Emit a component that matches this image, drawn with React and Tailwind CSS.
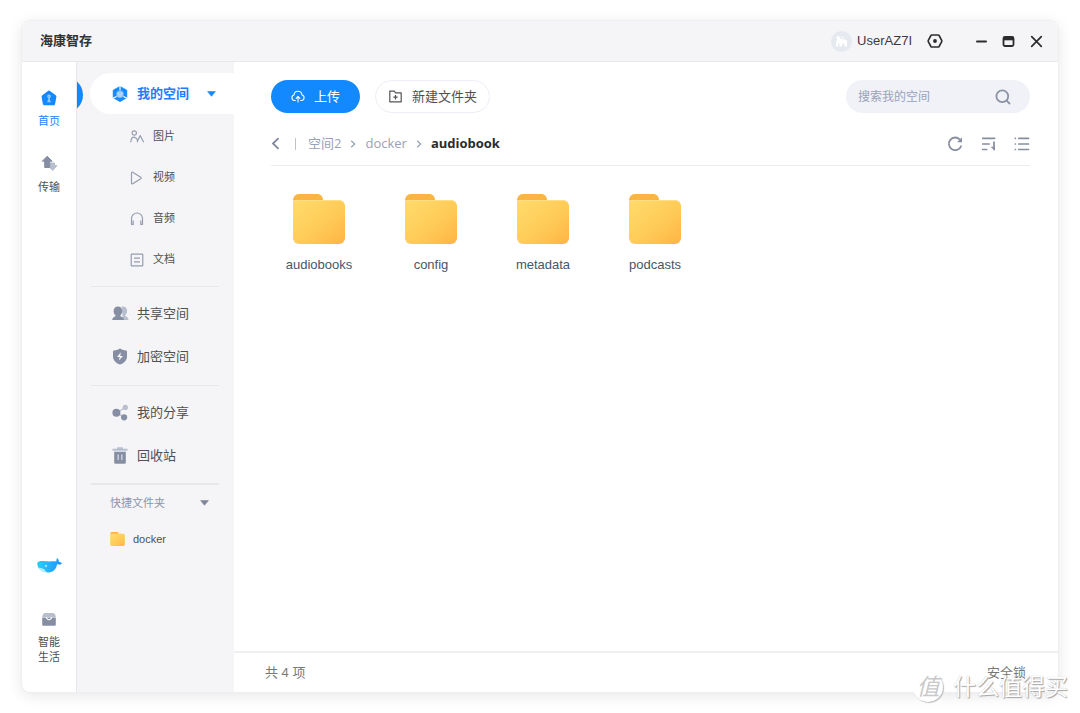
import React from "react";

const SLATE = "#868ea3";
const SLATE_LIGHT = "#b7bece";
const BLUE = "#1389ff";

function FolderIcon({ id, className }) {
  return (
    <svg viewBox="0 0 52 50" className={className} aria-hidden="true">
      <defs>
        <linearGradient id={id} x1="0" y1="0" x2="1" y2="1">
          <stop offset="0" stopColor="#ffdc6c" />
          <stop offset="0.55" stopColor="#ffcb58" />
          <stop offset="1" stopColor="#ffb443" />
        </linearGradient>
      </defs>
      <path d="M0 12V6a6 6 0 0 1 6-6h18c3.500 0 6 2.500 6 6v6z" fill="#ffb347" />
      <path d="M0 6h46a6 6 0 0 1 6 6v32a6 6 0 0 1-6 6H6a6 6 0 0 1-6-6z" fill={`url(#${id})`} />
      <path d="M0 6.500h46.500" stroke="#ffdf85" strokeWidth="1" />
    </svg>
  );
}

function HomeIcon() {
  return (
    <svg width="16" height="16" viewBox="0 0 16 16" aria-hidden="true">
      <path d="M7 .9a1.700 1.700 0 0 1 2 0l5.700 4.400c.6.500.8 1 .7 1.700l-1.300 7c-.2.900-.7 1.300-1.500 1.300H3.400c-.8 0-1.300-.4-1.500-1.300L.6 7c-.1-.7.100-1.200.7-1.700z" fill={BLUE} />
      <g fill="none" stroke="#b9dcff" strokeWidth="1.100">
        <circle cx="8" cy="6.200" r="1.200" />
        <path d="M8 7.400v3M6.300 11.800h3.400M6.800 10.300h2.400" />
      </g>
    </svg>
  );
}

function TransferIcon() {
  return (
    <svg width="17" height="17" viewBox="0 0 17 17" aria-hidden="true">
      <path d="M9 8h4.500v2.500H16l-4.300 5L8 11.500z" fill={SLATE_LIGHT} stroke={SLATE_LIGHT} strokeLinejoin="round" />
      <path d="M6.200 1.200l4.900 5H8.700v6.300h-5V6.200H1.300z" fill={SLATE} stroke={SLATE} strokeLinejoin="round" />
    </svg>
  );
}

function WhaleIcon() {
  return (
    <svg width="25" height="15" viewBox="0 0 25 15" aria-hidden="true">
      <defs>
        <linearGradient id="whale" x1="0" y1="0" x2="1" y2="0">
          <stop offset="0" stopColor="#2ccdf8" />
          <stop offset="1" stopColor="#1b95ff" />
        </linearGradient>
      </defs>
      <path d="M.3 4.700C1.200 3 4 2.700 9 3.300c4 .4 7.500-.3 10.200.3.300-1.200.2-2.400.9-3.600 1.300.9 1.900 2.300 1.800 4 1.200 0 2.300.4 3.100 1.400-1.300 1.400-3.200 1.300-5 .9-.6 4.500-3.500 8.200-8.500 8.200C5 14.500-.2 10.500.3 4.700z" fill="url(#whale)" />
      <path d="M1.500 9.500c2 .8 6 .5 8 4.800C6 14 3 12.500 1.500 9.500z" fill="#b4f1fc" />
      <circle cx="9" cy="8" r="0.900" fill="#d8f7ff" />
    </svg>
  );
}

function BoxIcon() {
  return (
    <svg width="14" height="13" viewBox="0 0 14 13" aria-hidden="true">
      <path d="M3 0h8c1.500 0 2.500 1.600 2.800 4H.2C.5 1.600 1.500 0 3 0z" fill={SLATE_LIGHT} />
      <path d="M.2 4.500h13.600V11.500c0 .8-.5 1.300-1.300 1.300h-11c-.8 0-1.300-.5-1.300-1.300z" fill={SLATE} />
      <path d="M4.300 4.200c.5 2 1.500 2.600 2.700 2.600s2.200-.6 2.700-2.600" fill="none" stroke="#fff" strokeWidth="1.100" />
    </svg>
  );
}

function SpaceIcon() {
  return (
    <svg width="16" height="16" viewBox="0 0 16 16" aria-hidden="true">
      <path d="M8 .3l6.900 3.900v7.600L8 15.700 1.100 11.800V4.200z" fill={BLUE} stroke={BLUE} strokeWidth="0.600" strokeLinejoin="round" />
      <path d="M8 0v4.500M1.200 12.300l3.600-2M14.800 12.300l-3.600-2" stroke="#fff" strokeWidth="1.200" />
      <circle cx="8" cy="8.300" r="3.700" fill="#a9d2ff" stroke="#4ba4ff" strokeWidth="0.800" />
    </svg>
  );
}

function PictureIcon() {
  return (
    <svg width="14" height="13" viewBox="0 0 14 13" fill="none" stroke="#959daf" strokeWidth="1.200" strokeLinecap="round" strokeLinejoin="round" aria-hidden="true">
      <circle cx="4.300" cy="3" r="2.200" />
      <path d="M.8 11.800c.3-3 1.700-4.700 3.300-4.700 1.300 0 2 .9 3.300 2.700M7.200 11.800l3-6.300 3.200 6.300" />
    </svg>
  );
}

function VideoIcon() {
  return (
    <svg width="14" height="14" viewBox="0 0 14 14" fill="none" stroke="#959daf" strokeWidth="1.200" strokeLinejoin="round" aria-hidden="true">
      <path d="M1.500 1.900c0-.7.600-1 1.200-.7l8 5.100c.6.400.6 1 0 1.400l-8 5.100c-.6.300-1.200 0-1.200-.7z" />
    </svg>
  );
}

function AudioIcon() {
  return (
    <svg width="14" height="14" viewBox="0 0 14 14" fill="none" stroke="#959daf" strokeWidth="1.200" strokeLinecap="round" aria-hidden="true">
      <path d="M1.500 12.300V6.500a5.500 5.500 0 0 1 11 0v5.800" />
      <path d="M1.700 12.300h1.500V8.800M12.300 12.300h-1.500V8.800" />
    </svg>
  );
}

function DocIcon() {
  return (
    <svg width="14" height="14" viewBox="0 0 14 14" fill="none" stroke="#959daf" strokeWidth="1.200" aria-hidden="true">
      <rect x="1.200" y="1.200" width="11.600" height="11.600" rx="0.600" />
      <path d="M4 5.200h6M4 8.800h6" />
    </svg>
  );
}

function SharedIcon() {
  return (
    <svg width="17" height="15" viewBox="0 0 17 15" aria-hidden="true">
      <path d="M9.500.8c3.200-.9 5.600 1 5.600 4.200 0 2-.9 3.500-2 4.300.4 1.400 3.400 1.600 3.400 4.700H11z" fill={SLATE_LIGHT} />
      <path d="M5.900.4c2.600 0 4.300 1.900 4.300 4.600 0 1.900-.8 3.600-2 4.500.3 1.500 3.700 1.300 3.900 4.500H.2c.2-3.200 3.300-3 3.500-4.500-1.300-.9-2.100-2.600-2.100-4.500C1.600 2.300 3.300.4 5.900.4z" fill={SLATE} />
    </svg>
  );
}

function ShieldIcon() {
  return (
    <svg width="16" height="17" viewBox="0 0 16 17" aria-hidden="true">
      <path d="M8 .6c2 1.300 4.200 1.900 6.600 2.100.3 0 .4.200.4.500v5c0 4-2.700 6.700-7 8.300C3.700 14.900 1 12.200 1 8.200v-5c0-.3.100-.5.400-.5C3.800 2.500 6 1.900 8 .6z" fill={SLATE} />
      <path d="M8.800 4.300L5 9h2.600l-.6 3.600L11 8H8.300z" fill="#f5f5f8" />
    </svg>
  );
}

function ShareIcon() {
  return (
    <svg width="17" height="17" viewBox="0 0 17 17" aria-hidden="true">
      <path d="M5 8.800l8-5.300M5 8.800l7 4.500" stroke={SLATE_LIGHT} strokeWidth="1.200" />
      <circle cx="13.300" cy="3.400" r="2.600" fill={SLATE_LIGHT} />
      <circle cx="4.400" cy="8.800" r="4" fill={SLATE} />
      <circle cx="12.100" cy="13.300" r="3.100" fill={SLATE} />
    </svg>
  );
}

function TrashIcon() {
  return (
    <svg width="16" height="17" viewBox="0 0 16 17" aria-hidden="true">
      <path d="M5 .3h6v1.500h4.500v2H.5v-2H5z" fill={SLATE_LIGHT} />
      <path d="M2.200 4.800h11.600v10.700c0 .8-.4 1.200-1.200 1.200H3.400c-.8 0-1.200-.4-1.200-1.200z" fill={SLATE} />
      <path d="M6.200 7.500v5.500M9.800 7.500v5.500" stroke="#d3d8e2" strokeWidth="1.300" />
    </svg>
  );
}

function CaretIcon({ color }) {
  return (
    <svg width="9" height="6" viewBox="0 0 9 6" aria-hidden="true">
      <path d="M.6.600h7.800L4.500 5.300z" fill={color} stroke={color} strokeWidth="0.600" strokeLinejoin="round" />
    </svg>
  );
}

function Chevron() {
  return (
    <svg width="6" height="8" viewBox="0 0 6 8" fill="none" stroke="#9aa3b5" strokeWidth="1.300" aria-hidden="true">
      <path d="M1.200.8L4.600 4 1.200 7.200" />
    </svg>
  );
}

const subItems = [
  { label: "图片", Icon: PictureIcon },
  { label: "视频", Icon: VideoIcon },
  { label: "音频", Icon: AudioIcon },
  { label: "文档", Icon: DocIcon },
];

const spaceItems = [
  { label: "共享空间", Icon: SharedIcon },
  { label: "加密空间", Icon: ShieldIcon },
];

const manageItems = [
  { label: "我的分享", Icon: ShareIcon },
  { label: "回收站", Icon: TrashIcon },
];

const folders = ["audiobooks", "config", "metadata", "podcasts"];

function TitleBar() {
  return (
    <header className="flex h-10 shrink-0 items-center justify-between rounded-t-lg bg-[#f5f5f8] pr-[15px] pl-[18px]">
      <h1 className="text-[13px] font-bold text-[#333]">海康智存</h1>
      <div className="flex items-center text-[#2c2c2e]">
        <span className="flex size-[21px] items-center justify-center rounded-full bg-[#e6e9f0]">
          <svg width="13" height="12" viewBox="0 0 13 12" fill="#fff" aria-hidden="true">
            <path d="M1 2.500L3.500.5 6 4l4 .5c1.500.2 2 1 2 2.500v4.500H9.500V8.800H7v2.700H4.500V9L3 8v3.500H1V6.500L2.500 5z" />
            <path d="M6 1.500l3 1.700" stroke="#fff" strokeWidth="1" />
          </svg>
        </span>
        <span className="ml-[5px] text-[13px] text-[#3a3a3c]">UserAZ7I</span>
        <button type="button" aria-label="设置" className="ml-[15px]">
          <svg width="16" height="16" viewBox="0 0 16 16" fill="none" aria-hidden="true">
            <path d="M4.800 2h6.400c.4 0 .7.200.9.500l2.600 4.800c.2.500.2.900 0 1.400l-2.600 4.800c-.2.300-.5.500-.9.500H4.800c-.4 0-.7-.2-.9-.5L1.300 8.700c-.2-.5-.2-.9 0-1.400l2.600-4.800c.2-.3.500-.5.900-.5z" stroke="currentColor" strokeWidth="1.600" />
            <circle cx="8" cy="8" r="1.900" fill="currentColor" />
          </svg>
        </button>
        <button type="button" aria-label="最小化" className="ml-8">
          <svg width="13" height="13" viewBox="0 0 13 13" stroke="currentColor" strokeWidth="2" strokeLinecap="round" aria-hidden="true">
            <path d="M2 6.500h9" />
          </svg>
        </button>
        <button type="button" aria-label="最大化" className="ml-[14px]">
          <svg width="13" height="13" viewBox="0 0 13 13" fill="none" aria-hidden="true">
            <rect x="1.500" y="2" width="10" height="9" rx="1.500" stroke="currentColor" strokeWidth="1.800" />
            <path d="M1.500 4h10" stroke="currentColor" strokeWidth="2.600" />
          </svg>
        </button>
        <button type="button" aria-label="关闭" className="ml-[15px]">
          <svg width="13" height="13" viewBox="0 0 13 13" stroke="currentColor" strokeWidth="1.700" strokeLinecap="round" aria-hidden="true">
            <path d="M1.700 1.700l9.600 9.600M11.300 1.700l-9.600 9.600" />
          </svg>
        </button>
      </div>
    </header>
  );
}

function Rail() {
  return (
    <nav className="flex w-[55px] shrink-0 flex-col items-center border-r border-[#e6e7ea] pt-7 pb-[27px] text-[11px] leading-[15px] text-[#505050]">
      <button type="button" className="flex flex-col items-center gap-2 text-[#1f7dff]">
        <HomeIcon />
        首页
      </button>
      <button type="button" className="mt-[26px] flex flex-col items-center gap-2">
        <TransferIcon />
        传输
      </button>
      <button type="button" aria-label="助手" className="mt-auto">
        <WhaleIcon />
      </button>
      <button type="button" className="mt-10 flex flex-col items-center gap-[9px]">
        <BoxIcon />
        <span className="w-[22px]">智能生活</span>
      </button>
    </nav>
  );
}

function NavRow({ label, Icon }) {
  return (
    <li>
      <button type="button" className="flex h-[43px] w-full items-center pl-[34px] text-[13px] text-[#505050]">
        <span className="flex w-[18px] justify-center">
          <Icon />
        </span>
        <span className="ml-2">{label}</span>
      </button>
    </li>
  );
}

function Divider({ className = "h-px" }) {
  return <div className={`mr-[15px] ml-[14px] bg-[#e6e7ea] ${className}`} />;
}

function Sidebar() {
  return (
    <aside className="relative w-[157px] shrink-0 overflow-hidden bg-[#f5f5f8] pt-[11px]">
      <span className="absolute top-[15px] -left-[30px] size-9 rounded-full bg-[#1389ff]" />
      <button type="button" className="ml-[13px] flex h-[41px] w-36 items-center rounded-l-full bg-white pl-[22px] text-[13px] font-bold text-[#1f7dff]">
        <SpaceIcon />
        <span className="ml-[9px]">我的空间</span>
        <span className="ml-[18px]">
          <CaretIcon color={BLUE} />
        </span>
      </button>
      <ul className="mt-[2px]">
        {subItems.map(({ label, Icon }) => (
          <li key={label}>
            <button type="button" className="flex h-[41px] w-full items-center pl-[53px] text-[11px] text-[#505050]">
              <Icon />
              <span className="ml-[9px]">{label}</span>
            </button>
          </li>
        ))}
      </ul>
      <div className="mt-[6px]">
        <Divider />
      </div>
      <ul className="pt-[5px] pb-[7px]">
        {spaceItems.map((item) => (
          <NavRow key={item.label} {...item} />
        ))}
      </ul>
      <Divider />
      <ul className="pt-[5px] pb-[6px]">
        {manageItems.map((item) => (
          <NavRow key={item.label} {...item} />
        ))}
      </ul>
      <Divider className="h-[2px]" />
      <button type="button" className="flex h-9 w-full items-center justify-between pr-[25px] pl-[33px] text-[11px] text-[#8d94a8]">
        快捷文件夹
        <CaretIcon color="#7d859a" />
      </button>
      <button type="button" className="flex h-9 w-full items-center pl-[33px] text-[11px] text-[#505050]">
        <FolderIcon id="quick-folder" className="h-[14px] w-[15px]" />
        <span className="ml-2">docker</span>
      </button>
    </aside>
  );
}

function Toolbar() {
  return (
    <div className="flex items-center text-[13px]">
      <button type="button" className="flex h-[33px] items-center rounded-full bg-[#1389ff] px-5 text-white">
        <svg width="14" height="13" viewBox="0 0 14 13" fill="none" stroke="#fff" strokeWidth="1.100" strokeLinecap="round" strokeLinejoin="round" aria-hidden="true">
          <path d="M4.300 10.500H3.500A2.800 2.800 0 0 1 3 5C3.200 2.700 4.800 1.200 7 1.200S10.800 2.700 11 5a2.800 2.800 0 0 1-.5 5.500h-.8" />
          <path d="M7 12V6.700M5.200 8.300L7 6.500l1.800 1.800" />
        </svg>
        <span className="ml-[9px]">上传</span>
      </button>
      <button type="button" className="ml-[15px] flex h-[33px] items-center rounded-full border border-[#eceef5] pr-3 pl-[13px] text-[#505050]">
        <svg width="13" height="13" viewBox="0 0 13 13" fill="none" stroke="#555" strokeWidth="1.200" strokeLinejoin="round" aria-hidden="true">
          <path d="M.8 1.200h4.400l1.400 1.600h5.600v9H.8z" />
          <path d="M6.500 5v4.400M4.300 7.200h4.400" />
        </svg>
        <span className="ml-[10px]">新建文件夹</span>
      </button>
      <form className="ml-auto flex h-[33px] w-[184px] items-center rounded-full bg-[#f1f2f7] pr-[19px] pl-3" onSubmit={(e) => e.preventDefault()}>
        <input type="search" aria-label="搜索我的空间" placeholder="搜索我的空间" className="min-w-0 flex-1 bg-transparent text-[12px] outline-none placeholder:text-[#99a1b8]" />
        <button type="submit" aria-label="搜索">
          <svg width="16" height="16" viewBox="0 0 16 16" fill="none" stroke="#8b93a6" strokeWidth="1.800" strokeLinecap="round" aria-hidden="true">
            <circle cx="7.300" cy="7.300" r="5.900" />
            <path d="M12 12l2.600 2.600" />
          </svg>
        </button>
      </form>
    </div>
  );
}

function Breadcrumb() {
  return (
    <div className="mt-[9px] flex h-11 items-center border-b border-[#ebecef]">
      <nav className="flex items-center font-['Open_Sans','Noto_Sans_CJK_SC',sans-serif] text-[13px] text-[#99a1b5]">
        <button type="button" aria-label="返回">
          <svg width="9" height="13" viewBox="0 0 9 13" fill="none" stroke="#7f879a" strokeWidth="1.800" aria-hidden="true">
            <path d="M7.500 1.200L2 6.500l5.500 5.300" />
          </svg>
        </button>
        <span className="mr-3 ml-[15px] h-3 w-px bg-[#bcc1cf]" />
        <a href="#space2">空间2</a>
        <span className="mx-[9px]"><Chevron /></span>
        <a href="#docker">docker</a>
        <span className="mx-[9px]"><Chevron /></span>
        <span className="font-bold text-[#2b2b2d]">audiobook</span>
      </nav>
      <div className="ml-auto flex items-center gap-[17px] text-[#868ea0]">
        <button type="button" aria-label="刷新">
          <svg width="17" height="16" viewBox="0 0 17 16" fill="none" aria-hidden="true">
            <path d="M12.800 3.500A6.300 6.300 0 1 0 14 10.300" stroke="currentColor" strokeWidth="1.800" strokeLinecap="round" />
            <path d="M15 1.300v4.900h-4.900z" fill="currentColor" />
          </svg>
        </button>
        <button type="button" aria-label="排序">
          <svg width="16" height="16" viewBox="0 0 16 16" fill="none" stroke="currentColor" strokeWidth="1.700" strokeLinecap="round" aria-hidden="true">
            <path d="M1.700 2.300h12M1.700 8h6.500M1.700 13.500h4M13 6v7.500" />
            <path d="M13.800 14.500L9.500 10.800h4.300z" fill="currentColor" stroke="none" />
          </svg>
        </button>
        <button type="button" aria-label="列表视图">
          <svg width="16" height="16" viewBox="0 0 16 16" fill="none" stroke="currentColor" strokeWidth="1.700" strokeLinecap="round" aria-hidden="true">
            <path d="M4.800 2.300H14.500M4.800 8H14.500M4.800 13.500H14.500M1.300 2.300h.1M1.300 8h.1M1.300 13.500h.1" />
          </svg>
        </button>
      </div>
    </div>
  );
}

function Watermark() {
  return (
    <div className="pointer-events-none absolute -right-[10px] -bottom-[10px] flex items-center gap-[10px]">
      <span className="flex size-[30px] items-center justify-center rounded-full bg-white text-[23px] leading-none text-[#c9c9c9] italic shadow-[1px_1px_1px_#bbb]">值</span>
      <span className="text-[23px] leading-[30px] text-white [text-shadow:1px_1px_1px_#a3a3a3,0_0_1px_#bbb]">什么值得买</span>
    </div>
  );
}

export default function App() {
  return (
    <div className="flex min-h-screen bg-white px-[22px] py-[21px] font-['Liberation_Sans','Noto_Sans_CJK_SC',sans-serif]">
      <div className="relative flex min-w-0 flex-1 flex-col rounded-lg bg-white shadow-[0_0_0_1px_#efeff1,0_3px_16px_rgba(0,0,0,0.11)]">
        <TitleBar />
        <div className="flex flex-1 border-t border-[#e8e8ea]">
          <Rail />
          <Sidebar />
          <main className="flex min-w-0 flex-1 flex-col">
            <div className="pt-[18px] pr-7 pl-[37px]">
              <Toolbar />
              <Breadcrumb />
            </div>
            <ul className="flex flex-wrap pt-7 pl-[29px]">
              {folders.map((name) => (
                <li key={name} className="w-28">
                  <button type="button" className="flex w-full flex-col items-center text-[13px] text-[#46566b]">
                    <FolderIcon id={`folder-${name}`} className="h-[50px] w-[52px]" />
                    <span className="mt-3 leading-[18px]">{name}</span>
                  </button>
                </li>
              ))}
            </ul>
            <footer className="mt-auto flex h-[41px] items-center justify-between border-t-2 border-[#f0f0f2] pr-8 pl-[31px] text-[13px] text-[#777]">
              <span>共 4 项</span>
              <button type="button">安全锁</button>
            </footer>
          </main>
        </div>
        <Watermark />
      </div>
    </div>
  );
}
